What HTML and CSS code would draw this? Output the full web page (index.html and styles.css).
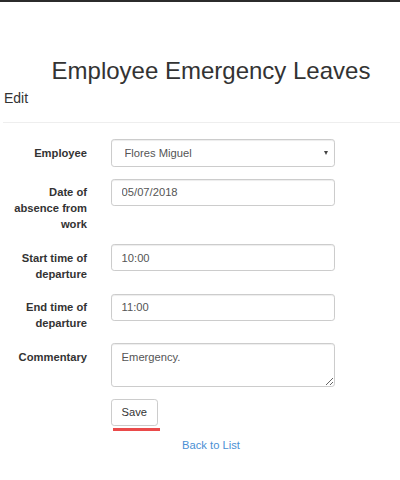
FILE: index.html
```html
<!DOCTYPE html>
<html>
<head>
<meta charset="utf-8">
<link rel="stylesheet" href="styles.css">
</head>
<body>
<div class="topbar"></div>
<div class="page">
  <div class="container">
    <h2 class="title">Employee Emergency Leaves</h2>
    <h4 class="subtitle">Edit</h4>
    <hr class="divider">
    <form class="form">
      <label class="label">Employee</label>
      <div class="select-wrap">
        <select class="control select">
          <option>Flores Miguel</option>
        </select>
      </div>

      <label class="label">Date of absence from work</label>
      <div><input class="control" type="text" value="05/07/2018"></div>

      <label class="label">Start time of departure</label>
      <div><input class="control" type="text" value="10:00"></div>

      <label class="label">End time of departure</label>
      <div><input class="control" type="text" value="11:00"></div>

      <label class="label">Commentary</label>
      <div><textarea class="control textarea">Emergency.</textarea></div>

      <div></div>
      <div class="actions">
        <button type="button" class="btn">Save</button>
        <div class="underline"></div>
      </div>
    </form>
    <div class="back"><a href="#" class="link">Back to List</a></div>
  </div>
</div>
</body>
</html>
```

FILE: styles.css
```css
* { box-sizing: border-box; }
html, body {
  margin: 0;
  padding: 0;
  background: #fff;
}
body {
  font-family: "Liberation Sans", Arial, sans-serif;
  font-size: 11.2px;
  line-height: 16px;
  color: #333;
}
.topbar {
  height: 1.5px;
  background: #2b2b2b;
}
.page {
  overflow: hidden;
}
.container {
  margin-right: -19px;
  padding-left: 3px;
}
.title {
  margin: 56.5px 0 0 0;
  font-size: 24px;
  line-height: 26.4px;
  font-weight: normal;
  text-align: center;
  color: #333;
}
.subtitle {
  margin: 6.6px 0 0 1px;
  font-size: 14px;
  line-height: 15.4px;
  font-weight: normal;
  color: #333;
}
.divider {
  margin: 16px 0 0 0;
  border: 0;
  border-top: 1px solid #eee;
  height: 0;
}
.form {
  margin-top: 16px;
  padding-left: 7px;
  display: grid;
  grid-template-columns: 77px 224px;
  column-gap: 24px;
  row-gap: 12px;
  align-items: start;
}
.label {
  display: block;
  padding-top: 5.6px;
  text-align: right;
  font-weight: bold;
  color: #333;
}
.control {
  display: block;
  width: 224px;
  height: 27.2px;
  padding: 4.8px 9.6px;
  font-family: "Liberation Sans", Arial, sans-serif;
  font-size: 11.2px;
  line-height: 16px;
  color: #555;
  background: #fff;
  border: 1px solid #ccc;
  border-radius: 3.2px;
  box-shadow: inset 0 1px 1px rgba(0, 0, 0, 0.075);
  margin: 0;
  outline: none;
}
.select-wrap {
  position: relative;
}
.select {
  -webkit-appearance: none;
  appearance: none;
  padding-left: 12.5px;
}
.select-wrap::after {
  content: "";
  position: absolute;
  left: 212.5px;
  top: 11.5px;
  border-left: 2.5px solid transparent;
  border-right: 2.5px solid transparent;
  border-top: 4px solid #444;
}
.textarea {
  height: 43.2px;
  resize: vertical;
}
.actions {
  display: flex;
  flex-direction: column;
  align-items: flex-start;
}
.btn {
  font-family: "Liberation Sans", Arial, sans-serif;
  font-size: 11.2px;
  line-height: 16px;
  color: #333;
  background: #fff;
  border: 1px solid #ccc;
  border-radius: 3.2px;
  padding: 4.8px 9.6px;
  margin: 0;
}
.underline {
  margin-top: 2px;
  margin-left: 2px;
  width: 47px;
  height: 3px;
  background: #ea4a4a;
}
.back {
  margin-top: 5.5px;
  text-align: center;
}
.link {
  color: #4a8fd4;
  text-decoration: none;
}
```
